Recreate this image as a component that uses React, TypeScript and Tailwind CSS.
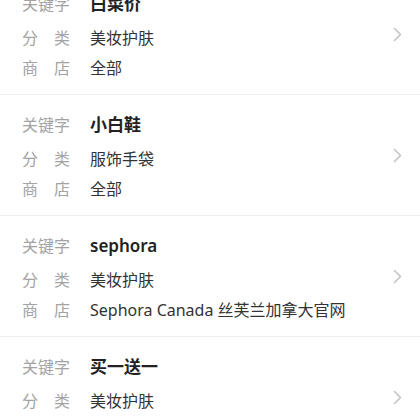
import React from "react";

type Item = { keyword: string; category: string; shop: string };

const items: Item[] = [
  { keyword: "白菜价", category: "美妆护肤", shop: "全部" },
  { keyword: "小白鞋", category: "服饰手袋", shop: "全部" },
  { keyword: "sephora", category: "美妆护肤", shop: "Sephora Canada 丝芙兰加拿大官网" },
  { keyword: "买一送一", category: "美妆护肤", shop: "全部" },
];

function Chevron() {
  return (
    <svg width="9" height="15" viewBox="0 0 9 15" fill="none">
      <path d="M1.5 1.5L7.5 7.5L1.5 13.5" stroke="#c4c4c4" strokeWidth="1.6" strokeLinecap="round" strokeLinejoin="round" />
    </svg>
  );
}

function Label({ chars }: { chars: string[] }) {
  return (
    <div className="w-[48px] flex justify-between text-[#a3a3a3] shrink-0">
      {chars.map((c, i) => (
        <span key={i}>{c}</span>
      ))}
    </div>
  );
}

function Card({ item }: { item: Item }) {
  return (
    <div className="h-[121px] border-b border-[#efefef] flex items-center pr-[18px]">
      <div className="flex-1 pl-[22px] pt-[15px] pb-[12px] flex flex-col text-[16px]">
        <div className="flex items-center leading-[30px]">
          <Label chars={["关", "键", "字"]} />
          <span className="ml-[20px] text-[17px] font-semibold text-[#222]">{item.keyword}</span>
        </div>
        <div className="flex items-center leading-[30px] mt-[4px]">
          <Label chars={["分", "类"]} />
          <span className="ml-[20px] text-[#333]">{item.category}</span>
        </div>
        <div className="flex items-center leading-[30px]">
          <Label chars={["商", "店"]} />
          <span className="ml-[20px] text-[#333]">{item.shop}</span>
        </div>
      </div>
      <Chevron />
    </div>
  );
}

export default function App() {
  return (
    <div
      className="w-[420px] h-[420px] overflow-hidden bg-white"
      style={{ fontFamily: '"Noto Sans", "Noto Sans CJK SC", sans-serif' }}
    >
      <div className="-mt-[26px]">
        {items.map((it, i) => (
          <Card key={i} item={it} />
        ))}
      </div>
    </div>
  );
}
